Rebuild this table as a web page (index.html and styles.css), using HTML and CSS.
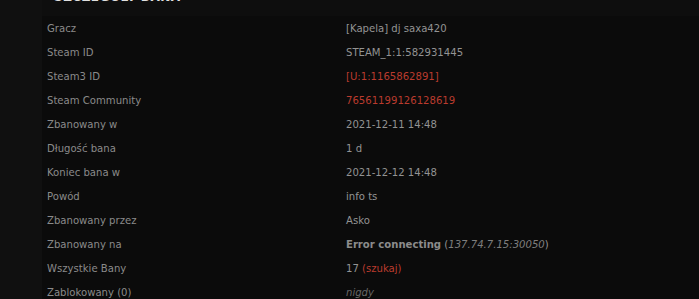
FILE: index.html
```html
<!DOCTYPE html>
<html lang="pl">
<head>
    <meta charset="UTF-8">
    <title>Szczegóły bana</title>
    <link rel="stylesheet" href="styles.css">
</head>
<body>
    <div class="page">
        <div class="ban-panel">
            <h3 class="ban-title">Szczegóły bana</h3>
            <table class="ban-details">
                <tr><td class="label">Gracz</td><td>[Kapela] dj saxa420</td></tr>
                <tr><td class="label">Steam ID</td><td>STEAM_1:1:582931445</td></tr>
                <tr><td class="label">Steam3 ID</td><td><a href="#">[U:1:1165862891]</a></td></tr>
                <tr><td class="label">Steam Community</td><td><a href="#">76561199126128619</a></td></tr>
                <tr><td class="label">Zbanowany w</td><td>2021-12-11 14:48</td></tr>
                <tr><td class="label">Długość bana</td><td>1 d</td></tr>
                <tr><td class="label">Koniec bana w</td><td>2021-12-12 14:48</td></tr>
                <tr><td class="label">Powód</td><td>info ts</td></tr>
                <tr><td class="label">Zbanowany przez</td><td>Asko</td></tr>
                <tr><td class="label">Zbanowany na</td><td><b>Error connecting</b> (<i>137.74.7.15:30050</i>)</td></tr>
                <tr><td class="label">Wszystkie Bany</td><td>17 <a href="#">(szukaj)</a></td></tr>
                <tr><td class="label">Zablokowany (0)</td><td><i class="muted">nigdy</i></td></tr>
            </table>
        </div>
    </div>
</body>
</html>
```

FILE: styles.css
```css
/* Reset */
* {
    margin: 0;
    padding: 0;
    box-sizing: border-box;
}

body {
    font-family: "DejaVu Sans", Verdana, sans-serif;
    font-size: 10.1px;
    background: #101010;
    color: #939393;
    overflow: hidden;
}

/* Page wrapper (scrolled so the title is cut off) */
.page {
    padding-left: 42px;
    margin-top: -10px;
}

.ban-panel {
    background: #0b0b0b;
    min-height: 320px;
}

.ban-title {
    background: #0e0e0e;
    color: #e0e0e0;
    font-size: 12px;
    font-weight: bold;
    text-transform: uppercase;
    letter-spacing: 0.5px;
    height: 26px;
    line-height: 15px;
    padding-left: 12px;
}

/* Details table */
.ban-details {
    border-collapse: collapse;
    width: 100%;
}

.ban-details td {
    height: 24px;
    padding: 0 5px;
    vertical-align: middle;
    white-space: nowrap;
}

.ban-details td.label {
    width: 299px;
    color: #8a8a8a;
}

.ban-details a {
    color: #bb3b2e;
    text-decoration: none;
}

.ban-details b {
    color: #8c8c8c;
}

.ban-details i {
    color: #7e7e7e;
}

.ban-details i.muted {
    color: #666;
}
```
